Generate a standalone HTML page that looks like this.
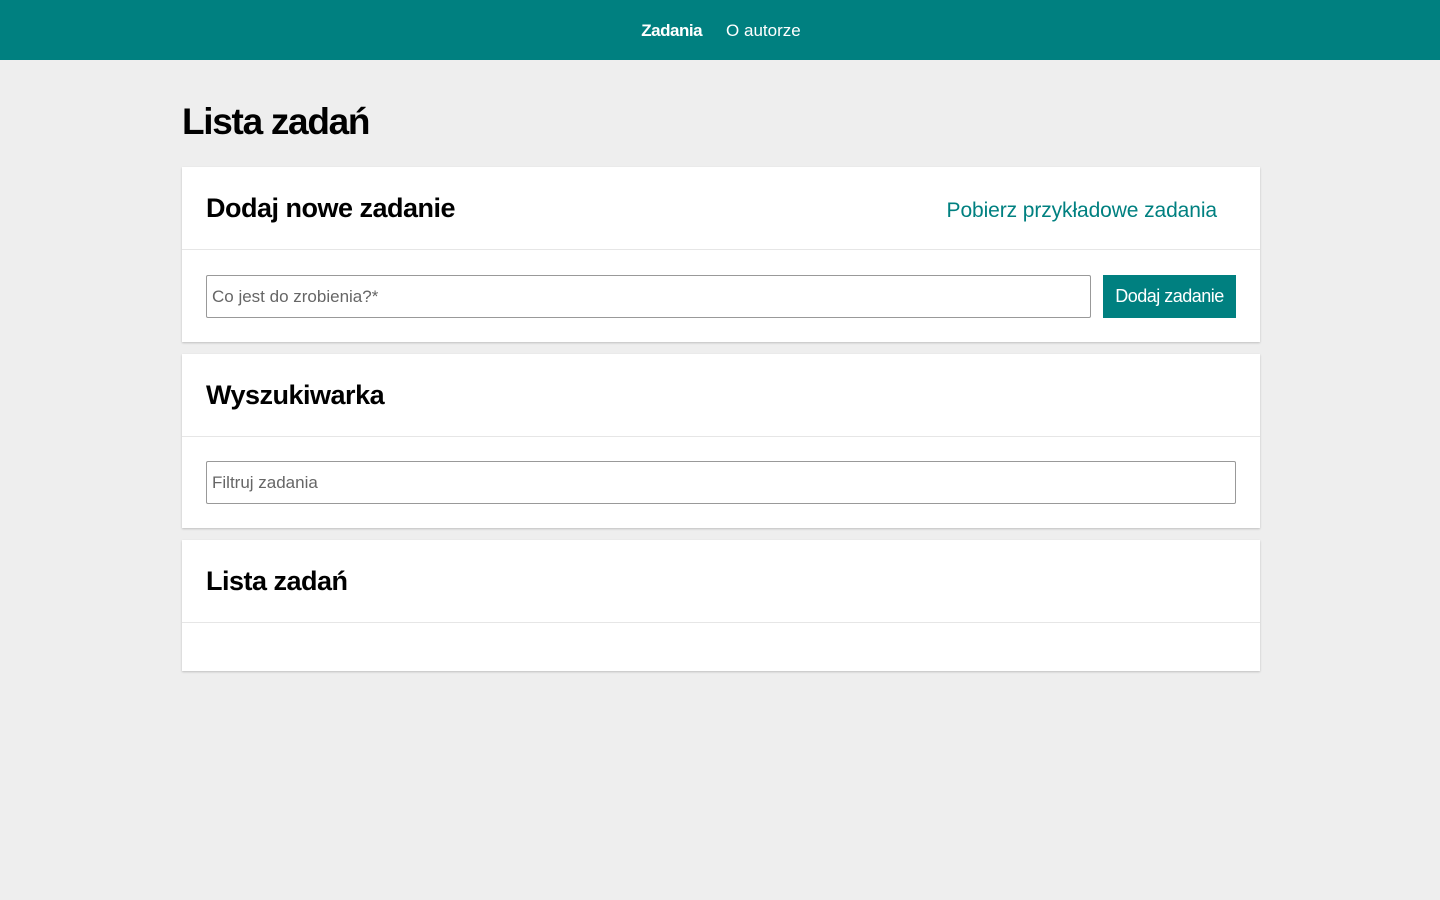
<!DOCTYPE html>
<html><head><meta charset="utf-8"><style>
*{box-sizing:border-box;margin:0;padding:0}
body{width:1440px;height:900px;background:#eeeeee;font-family:"Liberation Sans",sans-serif;color:#000;overflow:hidden}
.nav{height:60px;background:#008080;display:flex;justify-content:center;align-items:center;gap:24px;color:#fff;font-size:17px;padding-left:2px;padding-top:2px}
.nav b{letter-spacing:-0.5px}
h1{position:absolute;left:182px;top:101px;font-size:37px;font-weight:bold;letter-spacing:-1.3px}
.card{position:absolute;left:182px;width:1078px;background:#fff;box-shadow:0 1px 2px rgba(0,0,0,0.2)}
.hd{height:83px;border-bottom:1px solid #e6e6e6;position:relative}
.hd h2{position:absolute;left:24px;top:26px;font-size:27px;font-weight:bold;letter-spacing:-0.5px}
.hd a{position:absolute;right:43px;top:32px;color:#008080;font-size:21px;text-decoration:none;letter-spacing:-0.1px}
.in{position:absolute;height:43px;border:1px solid #999;border-radius:2px;font-size:17px;color:#666;padding:11px 5px}
.btn{position:absolute;left:921px;top:108px;width:133px;height:43px;background:#008080;color:#fff;font-size:18px;text-align:center;line-height:43px;letter-spacing:-0.5px}
</style></head><body>
<div class="nav"><b>Zadania</b><span>O autorze</span></div>
<h1>Lista zadań</h1>
<div class="card" style="top:167px;height:175px">
<div class="hd"><h2>Dodaj nowe zadanie</h2><a>Pobierz przykładowe zadania</a></div>
<div class="in" style="left:24px;top:108px;width:885px">Co jest do zrobienia?*</div>
<div class="btn">Dodaj zadanie</div>
</div>
<div class="card" style="top:354px;height:174px">
<div class="hd"><h2>Wyszukiwarka</h2></div>
<div class="in" style="left:24px;top:107px;width:1030px">Filtruj zadania</div>
</div>
<div class="card" style="top:540px;height:131px">
<div class="hd"><h2>Lista zadań</h2></div>
</div>
</body></html>
